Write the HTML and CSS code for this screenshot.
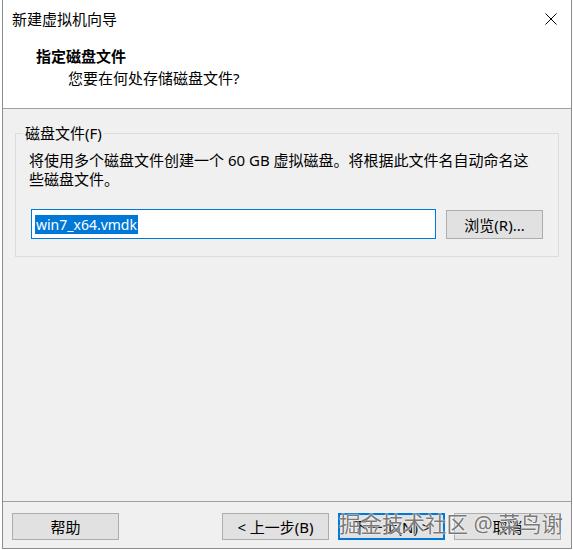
FILE: index.html
```html
<!DOCTYPE html>
<html lang="zh-CN">
<head>
<meta charset="utf-8">
<title>新建虚拟机向导</title>
<link rel="stylesheet" href="styles.css">
</head>
<body>
<div class="window">
  <div class="titlebar">
    <span class="title">新建虚拟机向导</span>
    <svg class="close" width="12" height="12" viewBox="0 0 12 12" aria-label="关闭">
      <path d="M0.5 0.5 L11.5 11.5 M11.5 0.5 L0.5 11.5" stroke="#000" stroke-width="1" fill="none"/>
    </svg>
  </div>
  <div class="header">
    <div class="heading">指定磁盘文件</div>
    <div class="subheading">您要在何处存储磁盘文件?</div>
  </div>
  <div class="content">
    <fieldset class="group">
      <legend>磁盘文件(F)</legend>
      <p class="desc">将使用多个磁盘文件创建一个 60 GB 虚拟磁盘。将根据此文件名自动命名这些磁盘文件。</p>
      <div class="path-row">
        <div class="textbox"><span class="sel">win7_x64.vmdk</span></div>
        <button class="btn browse">浏览(R)...</button>
      </div>
    </fieldset>
  </div>
  <div class="footer">
    <button class="btn">帮助</button>
    <div class="nav">
      <button class="btn">&lt; 上一步(B)</button>
      <button class="btn default">下一步(N) &gt;</button>
      <button class="btn">取消</button>
    </div>
  </div>
  <div class="watermark">掘金技术社区 @ 菜鸟谢</div>
</div>
</body>
</html>
```
FILE: styles.css
```css
html, body {
  margin: 0;
  padding: 0;
  background: #ffffff;
}

.window {
  position: relative;
  margin-left: 2px;
  width: 568px;
  height: 548px;
  border: 1px solid #8c8c8c;
  border-top: none;
  background: #f0f0f0;
  display: flex;
  flex-direction: column;
  font-family: "Noto Sans", "Noto Sans CJK SC", sans-serif;
  font-size: 15px;
  color: #000;
}

.titlebar {
  height: 37px;
  flex: none;
  background: #fff;
  display: flex;
  align-items: center;
  justify-content: space-between;
  padding: 0 14px 0 9px;
}

.title {
  line-height: 20px;
}

.close {
  display: block;
}

.header {
  flex: none;
  box-sizing: border-box;
  height: 72px;
  background: #fff;
  border-bottom: 1px solid #a0a0a0;
  padding: 9px 0 0 33px;
}

.heading {
  font-weight: bold;
  line-height: 20px;
}

.subheading {
  margin-top: 2px;
  padding-left: 32px;
  line-height: 20px;
}

.content {
  flex: 1;
  padding: 14px 12px 0;
}

.group {
  margin: 0;
  border: 1px solid #dcdcdc;
  padding: 0 15px 17px;
  min-width: 0;
}

.group legend {
  padding: 0 2px;
  margin-left: -8px;
  line-height: 20px;
}

.desc {
  margin: 8px 0 0 -2px;
  width: 505px;
  line-height: 19px;
}

.path-row {
  margin-top: 20px;
  display: flex;
  align-items: flex-end;
  gap: 10px;
}

.textbox {
  flex: 1;
  box-sizing: border-box;
  height: 30px;
  border: 1px solid #0078d7;
  background: #fff;
  padding-left: 3px;
  display: flex;
  align-items: center;
  font-size: 14px;
}

.sel {
  background: #0078d7;
  color: #fff;
  line-height: 19px;
  padding: 0 1px;
}

.btn {
  box-sizing: border-box;
  width: 107px;
  height: 27px;
  border: 1px solid #adadad;
  background: #e1e1e1;
  font-family: inherit;
  font-size: 15px;
  color: #000;
  padding: 0;
  line-height: 20px;
}

.browse {
  width: 97px;
  height: 29px;
}

.btn.default {
  border: 2px solid #0078d7;
}

.footer {
  flex: none;
  box-sizing: border-box;
  height: 47px;
  border-top: 1px solid #a0a0a0;
  padding: 11px 10px 0 9px;
  display: flex;
  align-items: flex-start;
  justify-content: space-between;
}

.nav {
  display: flex;
  gap: 9px;
}

.watermark {
  position: absolute;
  right: 8px;
  bottom: 11px;
  font-size: 21.5px;
  line-height: 26px;
  color: rgba(85, 85, 85, 0.8);
  text-shadow: 0 0 2px #fff, 0 0 1px #fff;
  white-space: nowrap;
}
```
